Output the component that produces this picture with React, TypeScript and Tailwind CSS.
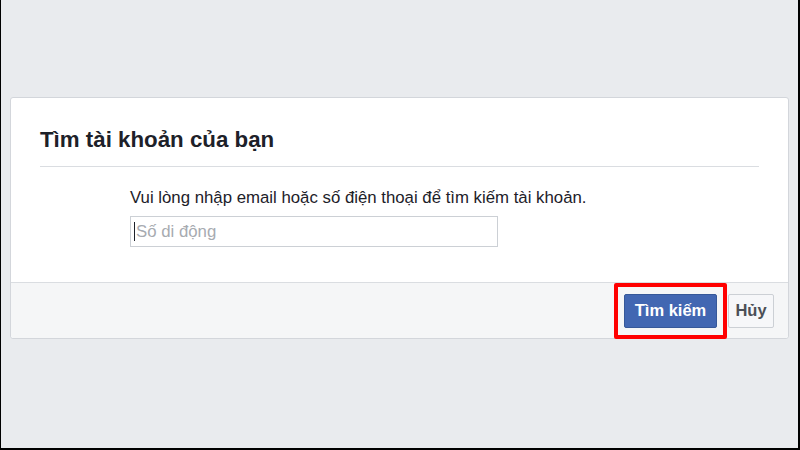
export default function App() {
  return (
    <div className="h-[450px] w-[800px] overflow-hidden border-l border-r-2 border-b-2 border-black bg-[#e9ebee] font-['Liberation_Sans',Arial,sans-serif] text-[#1d2129]">
      <div className="mx-[9px] mt-[97px] rounded-[3px] border border-[#d3d6db] bg-white">
        {/* header */}
        <div className="px-[29px] pt-[29px]">
          <h2 className="pb-[13px] text-[22.3px] font-bold leading-[26px] border-b border-[#dadde1]">
            Tìm tài khoản của bạn
          </h2>
        </div>

        {/* body */}
        <div className="pl-[119px] pt-[21px] pb-[35px]">
          <p className="text-[16.8px] leading-[19px]">
            Vui lòng nhập email hoặc số điện thoại để tìm kiếm tài khoản.
          </p>
          <div className="mt-[9px] flex h-[31px] w-[368px] items-center border border-[#ccd0d5] pl-[3px]">
            <span className="h-[19px] w-px bg-[#1d2129]" />
            <span className="ml-[1px] text-[16.8px] text-[#a7abb1]">Số di động</span>
          </div>
        </div>

        {/* footer */}
        <div className="relative flex h-[56px] items-center justify-end gap-[11px] rounded-b-[3px] border-t border-[#dadde1] bg-[#f5f6f7] pr-[14px]">
          <button className="h-[34px] w-[93px] rounded-[2px] border border-[#365899] bg-[#4267b2] text-[16.5px] font-bold text-white">
            Tìm kiếm
          </button>
          <button className="h-[34px] w-[46px] rounded-[2px] border border-[#ccd0d5] bg-[#f6f7f9] text-[16.5px] font-bold text-[#4b4f56]">
            Hủy
          </button>
          <div className="absolute right-[61px] top-0 h-[56px] w-[113px] rounded-[2px] border-4 border-[#ff0000]" />
        </div>
      </div>
    </div>
  );
}
